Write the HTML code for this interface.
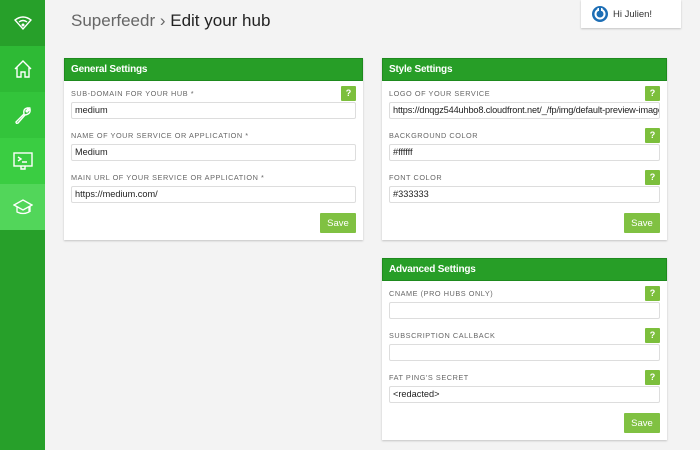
<!DOCTYPE html>
<html><head><meta charset="utf-8"><style>
*{box-sizing:border-box;margin:0;padding:0}
body{width:700px;height:450px;background:#f3f3f3;font-family:"Liberation Sans",sans-serif;position:relative;overflow:hidden}
.sb{position:absolute;left:0;top:0;width:45px;height:450px;background:#27a02a}
.sb div{position:absolute;left:0;width:45px;height:46px;display:flex;align-items:center;justify-content:center}
h1{position:absolute;left:71px;top:11px;font-size:17px;font-weight:normal;color:#666}
h1 b{font-weight:normal;color:#222}
.hi{position:absolute;left:581px;top:0;width:100px;height:28px;background:#fff;box-shadow:0 1px 2px rgba(0,0,0,.2);font-size:9.5px;color:#333}
.panel{position:absolute;background:#fff;box-shadow:0 1px 2px rgba(0,0,0,.2)}
.ph{height:23px;background:#279e27;border:1px solid #1e8a1e;color:#fff;font-weight:bold;font-size:10px;padding:0 6px;line-height:21px;letter-spacing:-0.2px}
.lbl{position:absolute;left:7px;font-size:7.3px;letter-spacing:0.55px;color:#666}
.q{position:absolute;right:7px;width:15px;height:15px;background:#7cbf3c;color:#fff;font-size:9px;font-weight:bold;text-align:center;line-height:15px;border-radius:1px}
.in{position:absolute;left:7px;right:7px;height:17px;border:1px solid #ddd;border-radius:2px;font-size:9.2px;color:#222;padding:0 3px;line-height:15px;white-space:nowrap;overflow:hidden}
.save{position:absolute;right:7px;width:36px;height:20px;background:#80c142;color:#fff;font-size:9.5px;display:flex;align-items:center;justify-content:center;border-radius:1px}
</style></head><body>
<div class="sb">
<div style="top:0;background:#27a02a"><svg width="20" height="16" viewBox="0 0 20 16" fill="none" stroke="#fff" stroke-width="1.4"><path d="M2 5 Q10 -1 18 5 L10 14 Z"/><path d="M6 7 Q10 4 14 7"/><circle cx="10" cy="10" r="0.8" fill="#fff"/></svg></div>
<div style="top:46px;background:#2eba35"><svg width="20" height="20" viewBox="0 0 20 20" fill="none" stroke="#fff" stroke-width="1.4"><path d="M2 10 L10 2 L18 10 M4 8 V18 H8 V13 H12 V18 H16 V8"/></svg></div>
<div style="top:92px;background:#33c43b"><svg width="20" height="20" viewBox="0 0 20 20" fill="none" stroke="#fff" stroke-width="1.4"><path d="M3 17 L11 9 Q10 4 14 3 L16 3 L13 6 L14 7 L17 4 Q18 9 12 10 L5 18 Q3 19 3 17Z"/></svg></div>
<div style="top:138px;background:#3acd42"><svg width="22" height="20" viewBox="0 0 22 20" fill="none" stroke="#fff" stroke-width="1.4"><rect x="2" y="2" width="18" height="13"/><path d="M6 6 L9 8 L6 10 M10 11 H15 M9 15 V18 H13 V15"/></svg></div>
<div style="top:184px;background:#52d65a"><svg width="20" height="18" viewBox="0 0 20 18" fill="none" stroke="#fff" stroke-width="1.3"><path d="M1 7 L10 2 L19 7 L10 12 Z M4 9 V14 Q10 17 16 14 V9 M17 8 V14"/></svg></div>
</div>
<h1>Superfeedr › <b>Edit your hub</b></h1>
<div class="hi"><svg style="position:absolute;left:10px;top:5px" width="18" height="18" viewBox="0 0 18 18"><circle cx="9" cy="9" r="8" fill="#1d6eb5"/><circle cx="9" cy="9" r="5.5" fill="#fff"/><circle cx="9" cy="9" r="3.5" fill="#1d6eb5"/><rect x="8" y="3" width="2" height="6" fill="#1d6eb5"/><rect x="6.5" y="3" width="1.5" height="3" fill="#fff"/><rect x="10" y="3" width="1.5" height="3" fill="#fff"/></svg><span style="position:absolute;left:32px;top:9px">Hi Julien!</span></div>

<div class="panel" style="left:64px;top:58px;width:299px;height:182px">
<div class="ph">General Settings</div>
<div class="lbl" style="top:31px">SUB-DOMAIN FOR YOUR HUB *</div><div class="q" style="top:28px">?</div>
<div class="in" style="top:44px">medium</div>
<div class="lbl" style="top:73px">NAME OF YOUR SERVICE OR APPLICATION *</div>
<div class="in" style="top:86px">Medium</div>
<div class="lbl" style="top:115px">MAIN URL OF YOUR SERVICE OR APPLICATION *</div>
<div class="in" style="top:128px">https://medium.com/</div>
<div class="save" style="top:155px">Save</div>
</div>

<div class="panel" style="left:382px;top:58px;width:285px;height:182px">
<div class="ph">Style Settings</div>
<div class="lbl" style="top:31px">LOGO OF YOUR SERVICE</div><div class="q" style="top:28px">?</div>
<div class="in" style="top:44px;letter-spacing:-0.15px">https://dnqgz544uhbo8.cloudfront.net/_/fp/img/default-preview-image.I</div>
<div class="lbl" style="top:73px">BACKGROUND COLOR</div><div class="q" style="top:70px">?</div>
<div class="in" style="top:86px">#ffffff</div>
<div class="lbl" style="top:115px">FONT COLOR</div><div class="q" style="top:112px">?</div>
<div class="in" style="top:128px">#333333</div>
<div class="save" style="top:155px">Save</div>
</div>

<div class="panel" style="left:382px;top:258px;width:285px;height:182px">
<div class="ph">Advanced Settings</div>
<div class="lbl" style="top:31px">CNAME (PRO HUBS ONLY)</div><div class="q" style="top:28px">?</div>
<div class="in" style="top:44px"></div>
<div class="lbl" style="top:73px">SUBSCRIPTION CALLBACK</div><div class="q" style="top:70px">?</div>
<div class="in" style="top:86px"></div>
<div class="lbl" style="top:115px">FAT PING'S SECRET</div><div class="q" style="top:112px">?</div>
<div class="in" style="top:128px">&lt;redacted&gt;</div>
<div class="save" style="top:155px">Save</div>
</div>
</body></html>
